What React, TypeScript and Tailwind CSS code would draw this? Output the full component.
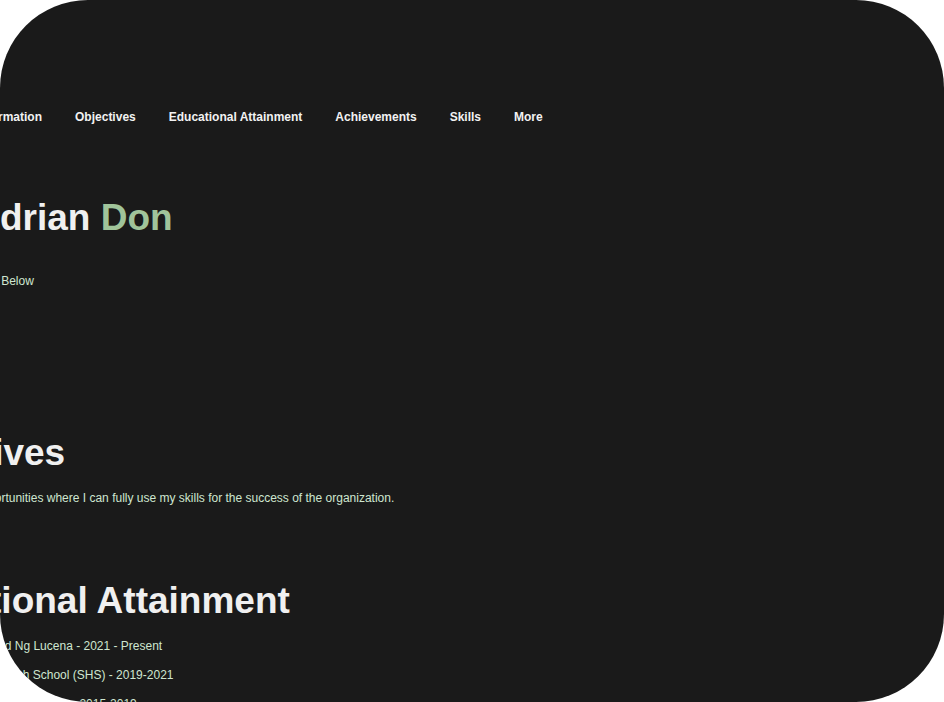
const navItems = ['Personal Information', 'Objectives', 'Educational Attainment', 'Achievements', 'Skills', 'More']

const schools = [
    'Pamantasan ng Lungsod Ng Lucena - 2021 - Present',
    'Maryhill College Senior High School (SHS) - 2019-2021',
    'Maryhill College - Junior High (JHS) - 2015-2019',
]

export default function App() {
    return (
        <div className='bg-white w-[944px] h-[702px]'>
            <main className="w-full h-full rounded-[88px] bg-[#1a1a1a] overflow-hidden font-['Liberation_Sans',Arial,sans-serif]">
                <div className='ml-[-122px] w-[1200px] whitespace-nowrap'>
                    <nav className='pt-[109px] pl-[44px] flex gap-[33px] text-[12px] leading-[16px] font-bold text-[#f2f2f2]'>
                        {navItems.map((item) => (
                            <a key={item} href='#'>{item}</a>
                        ))}
                    </nav>

                    <section className='mt-[73px]'>
                        <h1 className='text-[37px] leading-[40px] font-bold text-[#f0f0f0]'>
                            Mark Adrian <span className='text-[#a0c49a]'>Don</span>
                        </h1>
                        <p className='mt-[35px] text-[12px] leading-[16px] text-[#cfe6d0]'>View More Information Below</p>
                    </section>

                    <section className='mt-[144px]'>
                        <h2 className='text-[37px] leading-[40px] font-bold text-[#f0f0f0]'>Objectives</h2>
                        <p className='mt-[17px] text-[12px] leading-[16px] text-[#cfe6d0]'>
                            I am seeking new opportunities where I can fully use my skills for the success of the organization.
                        </p>
                    </section>

                    <section className='mt-[75px]'>
                        <h2 className='text-[37px] leading-[40px] font-bold text-[#f0f0f0]'>Educational Attainment</h2>
                        <div className='mt-[17px] flex flex-col gap-[13px] text-[12px] leading-[16px] text-[#cfe6d0]'>
                            {schools.map((school) => (
                                <p key={school}>{school}</p>
                            ))}
                        </div>
                    </section>
                </div>
            </main>
        </div>
    )
}
